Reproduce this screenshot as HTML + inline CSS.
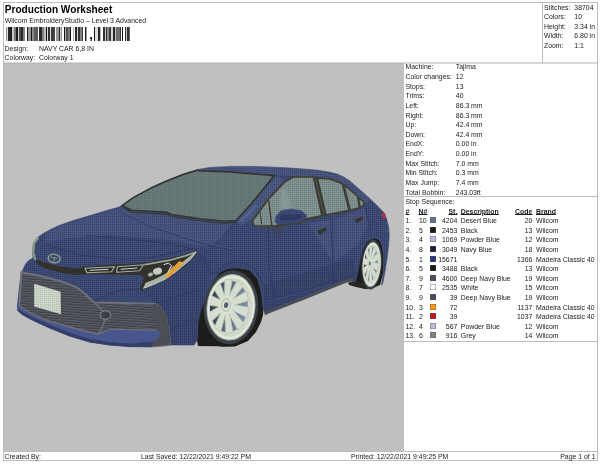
<!DOCTYPE html>
<html><head><meta charset="utf-8"><title>Production Worksheet</title>
<style>
html,body{margin:0;padding:0;background:#fff;}
body{width:600px;height:464px;position:relative;overflow:hidden;font-family:"Liberation Sans",sans-serif;font-size:6.9px;color:#1a1a1a;}
div{position:absolute;white-space:nowrap;line-height:10px;}
.ln{background:#bdbdbd;}
.b{font-weight:bold;}
.u{text-decoration:underline;text-underline-offset:0.4px;text-decoration-thickness:0.8px;}
.sw{width:6px;height:6px;box-shadow:inset 0 0 0 0.6px rgba(90,90,90,0.7);}
#title{font-size:10.1px;font-weight:bold;color:#000;line-height:12px;}
#tx{left:0;top:0;width:600px;height:464px;filter:blur(0.3px);}
#art{left:4px;top:63px;width:400px;height:388px;background:#c0c0c0;overflow:hidden;}
</style></head><body>

<div class="ln" style="left:3px;top:2px;width:595px;height:1px"></div>
<div class="ln" style="left:3px;top:460px;width:595px;height:1px"></div>
<div class="ln" style="left:3px;top:2px;width:1px;height:459px"></div>
<div class="ln" style="left:597px;top:2px;width:1px;height:459px"></div>
<div class="ln" style="left:3px;top:451px;width:595px;height:1px"></div>
<div class="ln" style="left:542px;top:2px;width:1px;height:61px"></div>
<div class="ln" style="left:404px;top:196px;width:194px;height:1px"></div>
<div class="ln" style="left:404px;top:341px;width:194px;height:1px"></div>
<div id="art"><svg width="400" height="388" viewBox="4 63 400 388" style="position:absolute;left:0;top:0">
<defs>
<pattern id="st" width="2" height="2" patternUnits="userSpaceOnUse"><rect width="2" height="2" fill="#3a4770"/><rect width="1" height="1" fill="#313d65"/><rect x="1" y="1" width="1" height="1" fill="#45527c"/></pattern>
<pattern id="gl" width="2" height="2" patternUnits="userSpaceOnUse"><rect width="2" height="2" fill="#647676"/><rect width="1" height="1" fill="#5c6e6e"/><rect x="1" y="1" width="1" height="1" fill="#6c7e7e"/></pattern>
<pattern id="gl2" width="2" height="2" patternUnits="userSpaceOnUse"><rect width="2" height="2" fill="#7a8d8c"/><rect width="1" height="1" fill="#6e8180"/><rect x="1" y="1" width="1" height="1" fill="#869998"/></pattern>
<pattern id="grl" width="4" height="2.5" patternUnits="userSpaceOnUse" patternTransform="skewY(4)"><rect width="4" height="2.5" fill="#3d3f45"/><rect width="4" height="1.3" fill="#5b5e66"/></pattern>
<pattern id="pl" width="2" height="2" patternUnits="userSpaceOnUse"><rect width="2" height="2" fill="#ccd6c8"/><rect width="1" height="1" fill="#b4c0b0"/></pattern>
<linearGradient id="gap" x1="0" y1="0" x2="1" y2="0"><stop offset="0" stop-color="#343a50"/><stop offset="0.45" stop-color="#59637f"/><stop offset="1" stop-color="#8593b4"/></linearGradient>
</defs>
<path d="M263.5 307.8 L261.5 292.7 L257.7 279.0 L250.2 270.0 L238.0 267.8 L228.0 268.5 L219.0 273.0 L212.0 283.0 L207.6 295.0 L200.8 310.0 L197.8 325.2 L197.0 340.3 L198.0 346.0 L235.0 346.5 L248.0 341.0 L256.0 332.0 L261.0 322.0 L263.0 315.0Z" fill="#1d1d1c"/>
<ellipse cx="225" cy="308" rx="30" ry="38.8" fill="#1d1d1c" transform="rotate(6 225 308)"/>
<ellipse cx="231" cy="307.3" rx="30" ry="39.2" fill="#1d1d1c" transform="rotate(6 231 307.3)"/>
<path d="M383.5 272.0 L383.7 255.0 L382.0 245.0 L379.0 239.5 L374.7 237.8 L371.0 238.8 L367.1 241.6 L362.6 250.6 L359.6 262.7 L357.3 274.8 L355.0 282.3 L360.0 287.0 L372.0 288.5 L380.0 285.0Z" fill="#1d1d1c"/>
<ellipse cx="367.8" cy="264.6" rx="11.8" ry="23.8" fill="#1d1d1c" transform="rotate(4 367.8 264.6)"/>
<ellipse cx="371.2" cy="264" rx="12" ry="24.6" fill="#1d1d1c" transform="rotate(4 371.2 264)"/>
<path d="M348.0 282.8 L355.0 280.5 L362.5 283.0 L373.0 287.5 L366.0 289.3 L356.0 287.0 L349.0 285.0Z" fill="#262622"/>
<path d="M37.5 237.5 L41.0 235.0 L45.0 232.5 L51.0 229.3 L58.3 225.8 L66.0 223.0 L75.0 220.0 L91.7 215.0 L108.3 210.0 L118.3 207.3 L121.7 205.5 L133.3 197.3 L150.0 188.2 L166.7 180.6 L183.3 174.0 L198.0 169.4 L210.0 167.4 L230.0 166.4 L250.0 166.4 L270.0 167.0 L290.0 168.0 L310.0 169.4 L320.0 170.6 L330.0 172.3 L336.7 174.0 L343.3 176.7 L350.0 181.0 L356.7 187.0 L363.3 192.7 L370.0 198.7 L376.0 204.5 L381.4 210.0 L384.6 213.5 L386.6 219.0 L388.6 226.7 L389.2 235.0 L388.6 245.0 L387.5 255.2 L385.2 270.2 L383.0 282.3 L381.5 285.3 L383.5 272.0 L383.7 255.0 L382.0 245.0 L379.0 239.5 L374.7 237.8 L371.0 238.8 L367.1 241.6 L362.6 250.6 L359.6 262.7 L357.3 274.8 L355.0 282.3 L352.5 280.8 L345.8 279.9 L338.3 283.0 L321.7 289.7 L305.0 296.4 L288.3 303.0 L273.3 308.8 L266.7 311.4 L264.5 312.8 L263.0 307.8 L261.5 292.7 L257.7 279.0 L250.2 270.0 L238.0 267.8 L228.0 268.5 L219.0 273.0 L212.0 283.0 L207.6 295.0 L200.8 310.0 L197.8 325.2 L197.0 340.3 L194.0 345.0 L170.0 345.0 L151.0 347.0 L130.0 346.7 L110.0 345.2 L90.0 342.3 L70.0 336.3 L50.0 328.3 L40.0 323.8 L30.0 319.0 L22.0 314.5 L17.6 310.5 L17.3 306.0 L18.0 300.0 L19.7 284.5 L21.5 272.4 L25.5 264.0 L29.0 260.2 L33.0 258.0 L32.5 253.0 L33.3 243.3Z" fill="url(#st)" stroke="#3a4770" stroke-width="0.6" stroke-linejoin="round"/>
<clipPath id="bc"><path d="M37.5 237.5 L41.0 235.0 L45.0 232.5 L51.0 229.3 L58.3 225.8 L66.0 223.0 L75.0 220.0 L91.7 215.0 L108.3 210.0 L118.3 207.3 L121.7 205.5 L133.3 197.3 L150.0 188.2 L166.7 180.6 L183.3 174.0 L198.0 169.4 L210.0 167.4 L230.0 166.4 L250.0 166.4 L270.0 167.0 L290.0 168.0 L310.0 169.4 L320.0 170.6 L330.0 172.3 L336.7 174.0 L343.3 176.7 L350.0 181.0 L356.7 187.0 L363.3 192.7 L370.0 198.7 L376.0 204.5 L381.4 210.0 L384.6 213.5 L386.6 219.0 L388.6 226.7 L389.2 235.0 L388.6 245.0 L387.5 255.2 L385.2 270.2 L383.0 282.3 L381.5 285.3 L383.5 272.0 L383.7 255.0 L382.0 245.0 L379.0 239.5 L374.7 237.8 L371.0 238.8 L367.1 241.6 L362.6 250.6 L359.6 262.7 L357.3 274.8 L355.0 282.3 L352.5 280.8 L345.8 279.9 L338.3 283.0 L321.7 289.7 L305.0 296.4 L288.3 303.0 L273.3 308.8 L266.7 311.4 L264.5 312.8 L263.0 307.8 L261.5 292.7 L257.7 279.0 L250.2 270.0 L238.0 267.8 L228.0 268.5 L219.0 273.0 L212.0 283.0 L207.6 295.0 L200.8 310.0 L197.8 325.2 L197.0 340.3 L194.0 345.0 L170.0 345.0 L151.0 347.0 L130.0 346.7 L110.0 345.2 L90.0 342.3 L70.0 336.3 L50.0 328.3 L40.0 323.8 L30.0 319.0 L22.0 314.5 L17.6 310.5 L17.3 306.0 L18.0 300.0 L19.7 284.5 L21.5 272.4 L25.5 264.0 L29.0 260.2 L33.0 258.0 L32.5 253.0 L33.3 243.3Z"/></clipPath>
<g clip-path="url(#bc)">
<path d="M45.0 233.0 L60.0 226.0 L122.0 207.0 L170.0 214.0 L236.0 221.5 L222.0 238.0 L205.0 247.0 L170.0 240.0 L110.0 235.0 L70.0 238.0 L45.0 243.0Z" fill="#ffffff" opacity="0.05"/>
<path d="M198.0 169.0 L250.0 166.0 L310.0 169.0 L345.0 177.0 L372.0 200.0 L366.0 203.0 L341.0 181.5 L313.0 176.3 L293.0 176.5 L276.0 174.5 L230.0 171.0 L198.0 170.0Z" fill="#ffffff" opacity="0.06"/>
<path d="M276.0 176.0 L284.0 180.0 L253.0 219.0 L240.0 226.0 L237.0 221.0Z" fill="#ffffff" opacity="0.07"/>
<path d="M308.0 223.5 L332.0 219.5 L333.0 262.0Z" fill="#ffffff" opacity="0.06"/>
<path d="M334.0 219.0 L365.0 208.0 L368.0 225.0 L358.0 245.0 L334.0 262.0Z" fill="#ffffff" opacity="0.05"/>
<path d="M264.0 285.0 L352.0 258.0 L357.0 275.0 L353.0 281.0 L264.5 313.0Z" fill="#000000" opacity="0.08"/>
<path d="M140.0 291.0 L197.0 251.0 L212.0 262.0 L204.0 300.0 L197.0 346.0 L170.0 346.0 L160.0 306.0Z" fill="#000000" opacity="0.05"/>
<path d="M255.5 206.0 L248.0 214.0 L241.0 220.5" fill="none" stroke="#5767a0" stroke-width="2.6" stroke-linecap="round" stroke-linejoin="round" opacity="0.75"/>
<path d="M234.0 223.0 L226.0 233.0 L215.0 245.0 L203.0 256.0 L196.0 262.0" fill="none" stroke="#2e3762" stroke-width="0.8" stroke-linecap="round" stroke-linejoin="round"/>
<path d="M122.0 211.5 L150.0 225.0 L185.0 237.0 L215.0 245.5 L233.0 249.0" fill="none" stroke="#4c598a" stroke-width="0.9" stroke-linecap="round" stroke-linejoin="round"/>
<path d="M122.0 212.7 L150.0 226.2 L185.0 238.2 L215.0 246.7 L233.0 250.2" fill="none" stroke="#2c355f" stroke-width="0.7" stroke-linecap="round" stroke-linejoin="round"/>
<path d="M86.0 235.5 L130.0 239.5 L170.0 243.5 L197.0 250.0" fill="none" stroke="#2e3762" stroke-width="0.8" stroke-linecap="round" stroke-linejoin="round"/>
<path d="M47.0 245.0 L80.0 255.0 L120.0 259.0 L150.0 258.0 L190.0 249.0" fill="none" stroke="#2e3762" stroke-width="0.8" stroke-linecap="round" stroke-linejoin="round"/>
<path d="M198.0 251.0 L207.0 266.0 L214.0 275.0 L226.0 264.0 L240.0 262.0 L254.0 268.0 L262.0 282.0" fill="none" stroke="#2e3762" stroke-width="0.7" stroke-linecap="round" stroke-linejoin="round"/>
<path d="M268.0 300.0 L300.0 292.0 L333.0 282.0 L352.0 276.0" fill="none" stroke="#2e3762" stroke-width="0.8" stroke-linecap="round" stroke-linejoin="round"/>
<path d="M268.0 301.2 L300.0 293.2 L333.0 283.2" fill="none" stroke="#4a5788" stroke-width="0.6" stroke-linecap="round" stroke-linejoin="round"/>
<path d="M96.0 300.0 L120.0 290.0 L142.0 289.0" fill="none" stroke="#2e3762" stroke-width="0.8" stroke-linecap="round" stroke-linejoin="round"/>
<path d="M160.0 305.0 L178.0 296.0 L197.0 290.0" fill="none" stroke="#2e3762" stroke-width="0.7" stroke-linecap="round" stroke-linejoin="round"/>
<path d="M170.0 330.0 L185.0 322.0 L197.0 318.0" fill="none" stroke="#2e3762" stroke-width="0.7" stroke-linecap="round" stroke-linejoin="round"/>
</g>
<path d="M198.7 170.6 L230.0 172.0 L274.3 175.6 L251.7 203.3 L236.0 220.5 L225.0 221.3 L200.0 218.7 L171.7 214.5 L166.7 212.3 L150.0 211.3 L131.7 210.3 L122.2 205.6 L133.3 197.6 L150.0 188.6 L166.7 181.0 L183.3 174.4 L198.0 170.0Z" fill="url(#gl)" stroke="#35352e" stroke-width="1.6" stroke-linejoin="round"/>
<path d="M123.0 207.5 L131.7 212.0 L150.0 213.2 L166.7 214.3 L171.7 216.5 L200.0 220.8 L225.0 223.3 L236.0 222.3" fill="none" stroke="#33332c" stroke-width="1.1" stroke-linecap="round" stroke-linejoin="round"/>
<path d="M253.3 224.2 L252.5 220.8 L268.3 199.2 L285.0 181.7 L293.3 176.9 L313.5 176.8 L322.0 215.6 L305.0 220.0 L280.0 226.2 L255.0 225.8Z" fill="url(#gl2)" stroke="#403f31" stroke-width="1.8" stroke-linejoin="round"/>
<path d="M281.0 190.5 L284.5 188.5 L293.0 208.3 L280.0 210.5Z" fill="#849796"/>
<path d="M317.3 178.0 L330.0 178.8 L342.3 183.6 L349.3 210.4 L325.8 215.2Z" fill="url(#gl2)" stroke="#403f31" stroke-width="1.8" stroke-linejoin="round"/>
<path d="M313.3 176.6 L317.3 177.6 L325.9 215.2 L321.8 216.0Z" fill="#3a3a33"/>
<path d="M315.5 179.0 L323.7 214.0" fill="none" stroke="#5d6670" stroke-width="0.7" stroke-linecap="round" stroke-linejoin="round"/>
<path d="M343.9 184.6 L357.5 196.2 L359.4 207.8 L350.1 210.2Z" fill="url(#gl2)" stroke="#403f31" stroke-width="1.6" stroke-linejoin="round"/>
<path d="M358.6 197.8 L364.3 202.8 L363.3 205.5 L360.2 207.2Z" fill="url(#gl2)" stroke="#403f31" stroke-width="1.4" stroke-linejoin="round"/>
<path d="M268.7 200.8 L271.7 225.0" fill="none" stroke="#403f31" stroke-width="1.4" stroke-linecap="round" stroke-linejoin="round"/>
<path d="M260.0 212.5 L261.7 224.0" fill="none" stroke="#403f31" stroke-width="1.1" stroke-linecap="round" stroke-linejoin="round"/>
<path d="M277.3 225.5 L275.3 233.0" fill="none" stroke="#45452f" stroke-width="1.1" stroke-linecap="round" stroke-linejoin="round"/>
<path d="M281.3 226.5 L279.0 235.0" fill="none" stroke="#45452f" stroke-width="1.1" stroke-linecap="round" stroke-linejoin="round"/>
<path d="M275.0 221.5 L276.0 216.0 L281.0 210.5 L291.0 209.0 L301.0 210.5 L306.5 215.0 L307.0 219.0 L303.0 221.5 L298.0 224.0 L278.0 225.2Z" fill="url(#st)" stroke="#485588" stroke-width="0.8" stroke-linejoin="round"/>
<path d="M279.0 217.5 L282.0 214.5 L300.0 214.0 L302.5 216.5 L301.0 219.5 L281.0 220.5Z" fill="#2f3964"/>
<path d="M265.0 226.6 L275.0 226.3 L278.0 225.3 L298.0 223.7 L307.0 219.2 L311.0 217.7 L322.0 216.3" fill="none" stroke="#403f31" stroke-width="1.6" stroke-linecap="round" stroke-linejoin="round"/>
<path d="M330.2 216.5 L332.3 248.9 L333.4 284.0" fill="none" stroke="#2c3768" stroke-width="0.8" stroke-linecap="round" stroke-linejoin="round"/>
<path d="M365.7 208.0 L366.8 216.5 L370.0 227.0 L371.0 236.0" fill="none" stroke="#2c3768" stroke-width="0.8" stroke-linecap="round" stroke-linejoin="round"/>
<path d="M268.0 229.3 L269.3 266.7 L272.0 285.0 L274.7 298.7" fill="none" stroke="#2c3768" stroke-width="0.8" stroke-linecap="round" stroke-linejoin="round"/>
<path d="M317.2 230.8 L325.9 227.3 L327.0 230.3 L319.4 234.9Z" fill="#35352e"/>
<path d="M355.0 219.8 L362.5 216.5 L362.8 219.6 L356.5 223.0Z" fill="#35352e"/>
<path d="M381.5 213.3 L385.1 213.5 L386.0 217.8 L383.0 218.5Z" fill="#c42a3a"/>
<path d="M264.5 312.6 L266.7 311.2 L273.3 308.6 L288.3 302.8 L305.0 296.2 L321.7 289.5 L338.3 282.8 L345.8 279.7 L353.0 277.8 L353.3 280.8 L346.1 282.7 L338.6 285.8 L322.0 292.5 L305.3 299.2 L288.6 305.8 L273.6 311.6 L267.0 314.2 L264.8 315.6Z" fill="#4b4d55"/>
<path d="M35.8 259.2 L43.3 262.3 L60.0 266.5 L76.7 268.5 L84.0 267.0 L110.0 265.0 L144.0 263.0 L176.0 257.0 L197.0 250.5 L196.0 254.0 L184.0 267.0 L166.0 279.0 L152.0 286.0 L141.0 290.5 L140.0 288.0 L144.0 278.0 L140.0 275.0 L86.7 274.2 L76.7 275.0 L60.0 272.6 L43.3 267.8 L36.2 263.2Z" fill="#33312b"/>
<path d="M37.8 238.0 L34.0 243.3 L33.2 253.3 L35.2 259.0" fill="none" stroke="#8a9a88" stroke-width="2.2" stroke-linecap="round" stroke-linejoin="round"/>
<ellipse cx="54.2" cy="258.5" rx="6" ry="4.3" fill="none" stroke="#8c9c8a" stroke-width="1.4" transform="rotate(8 54.2 258.3)"/>
<path d="M50.5 257.0 L57.5 258.3" fill="none" stroke="#8c9c8a" stroke-width="0.9" stroke-linecap="round" stroke-linejoin="round"/>
<path d="M54.3 257.5 L53.8 261.5" fill="none" stroke="#8c9c8a" stroke-width="0.9" stroke-linecap="round" stroke-linejoin="round"/>
<path d="M85.0 268.2 L114.5 266.8 L111.5 271.8 L87.0 272.8Z" fill="#2e2e2a" stroke="#a3b3a3" stroke-width="1.1" stroke-linejoin="round"/>
<path d="M90.0 270.3 L108.0 269.4" fill="none" stroke="#e4ebe4" stroke-width="0.9" stroke-linecap="round" stroke-linejoin="round"/>
<path d="M117.5 266.7 L143.5 264.8 L139.5 270.8 L116.5 272.2Z" fill="#2e2e2a" stroke="#a3b3a3" stroke-width="1.1" stroke-linejoin="round"/>
<path d="M121.0 269.3 L137.0 268.0" fill="none" stroke="#e4ebe4" stroke-width="0.9" stroke-linecap="round" stroke-linejoin="round"/>
<path d="M145.0 264.6 L153.3 263.2 L170.0 260.2 L186.0 255.6 L195.5 252.2" fill="none" stroke="#98a694" stroke-width="1.7" stroke-linecap="round" stroke-linejoin="round"/>
<path d="M143.2 288.0 L153.3 284.2 L165.0 278.8 L176.7 270.6 L190.2 259.2 L196.3 251.6 L191.5 255.0 L178.0 265.5 L165.0 274.0 L153.0 280.0 L145.8 282.8Z" fill="#a7b5a7"/>
<path d="M143.6 288.2 L153.3 284.6 L165.0 279.2 L176.7 271.0 L190.2 259.6 L195.8 252.6" fill="none" stroke="#e6ece6" stroke-width="0.9" stroke-linecap="round" stroke-linejoin="round"/>
<ellipse cx="157.5" cy="271.2" rx="4.6" ry="3.4" fill="#c3cdc3" transform="rotate(-15 157.5 271.2)"/>
<ellipse cx="150.5" cy="274.5" rx="2.6" ry="1.8" fill="#aab6aa" transform="rotate(-15 150.5 274.5)"/>
<path d="M164.0 264.5 L168.5 263.2 L171.5 265.5 L168.0 272.0" fill="none" stroke="#dfe6df" stroke-width="1.0" stroke-linecap="round" stroke-linejoin="round"/>
<path d="M166.0 275.5 L173.5 266.0" fill="none" stroke="#cfd8cf" stroke-width="0.9" stroke-linecap="round" stroke-linejoin="round"/>
<path d="M164.4 277.1 L179.0 261.3 L184.3 262.5 L168.5 277.7Z" fill="#e8a030"/>
<path d="M21.3 272.3 L40.0 276.0 L60.0 281.0 L76.0 287.0 L84.0 293.0 L94.0 302.5 L154.0 303.6 L159.0 306.0 L165.0 315.0 L168.0 328.0 L170.0 342.0 L169.0 345.0 L151.0 346.4 L154.0 340.0 L161.0 334.0 L157.0 330.5 L110.0 329.5 L104.0 332.0 L98.0 334.5 L70.0 327.5 L44.5 320.0 L27.2 311.5 L19.2 306.0 L20.5 289.0Z" fill="url(#grl)" stroke="#6e717b" stroke-width="1.9" stroke-linejoin="round"/>
<path d="M154.0 303.6 L159.0 306.0 L165.0 315.0 L168.0 328.0 L170.0 342.0 L169.0 345.0 L151.0 346.4 L154.0 340.0 L161.0 334.0 L157.0 330.5 L156.0 318.0 L152.5 308.0Z" fill="#4c4e56"/>
<path d="M159.0 306.0 L165.0 315.0 L168.0 328.0 L170.0 342.0" fill="none" stroke="#45452f" stroke-width="0.8" stroke-linecap="round" stroke-linejoin="round"/>
<path d="M94.0 302.5 L100.0 308.0 L106.0 315.0 L103.0 326.0 L98.0 334.0" fill="none" stroke="#6b6e78" stroke-width="1.6" stroke-linecap="round" stroke-linejoin="round"/>
<path d="M34.2 283.8 L60.6 291.7 L61.0 314.3 L34.2 306.4Z" fill="url(#pl)"/>
<path d="M17.3 306.0 L18.8 306.3 L27.2 312.0 L44.5 320.5 L70.0 328.0 L98.0 335.0 L104.0 332.3 L110.0 329.8 L157.0 330.8 L161.0 334.0 L154.0 342.0 L130.0 344.0 L110.0 342.5 L90.0 339.5 L70.0 333.5 L50.0 325.5 L30.0 316.5 L17.6 309.5Z" fill="#47568c"/>
<path d="M17.6 309.0 L30.0 316.0 L50.0 325.0 L70.0 333.0 L90.0 339.0 L110.0 342.0 L130.0 343.7 L154.0 341.5 L151.0 347.0 L130.0 346.7 L110.0 345.2 L90.0 342.3 L70.0 336.3 L50.0 328.3 L40.0 323.8 L30.0 319.0 L22.0 314.5 L17.6 310.5Z" fill="#323d6a"/>
<ellipse cx="105.5" cy="315" rx="5.2" ry="4.4" fill="#3d3f47" stroke="#6f727c" stroke-width="1.6"/>
<g transform="translate(231 307.3) rotate(6) scale(0.2400 0.3280)">
<circle r="113" fill="#3a4048"/>
<circle r="100" fill="#d0d9c9"/>
<circle cx="-9" cy="-2" r="79" fill="url(#gap)"/>
<path d="M-22.2 2.4 L69.6 25.5 L74.6 -5.0 L-19.8 -12.4Z" fill="#d6decf" stroke="#b3bfae" stroke-width="2.5" stroke-linejoin="round"/>
<path d="M-25.9 0.7 L39.3 67.3 L59.5 43.8 L-16.1 -10.7Z" fill="#d6decf" stroke="#b3bfae" stroke-width="2.5" stroke-linejoin="round"/>
<path d="M-28.2 -2.8 L-10.4 83.4 L19.2 74.4 L-13.8 -7.2Z" fill="#d6decf" stroke="#b3bfae" stroke-width="2.5" stroke-linejoin="round"/>
<path d="M-28.1 -7.3 L-60.5 66.6 L-31.0 76.1 L-13.9 -2.7Z" fill="#d6decf" stroke="#b3bfae" stroke-width="2.5" stroke-linejoin="round"/>
<path d="M-25.2 -11.2 L-90.4 22.9 L-73.2 48.6 L-16.8 1.2Z" fill="#d6decf" stroke="#b3bfae" stroke-width="2.5" stroke-linejoin="round"/>
<path d="M-20.0 -12.4 L-88.0 -29.6 L-92.1 1.1 L-22.0 2.4Z" fill="#d6decf" stroke="#b3bfae" stroke-width="2.5" stroke-linejoin="round"/>
<path d="M-15.3 -9.9 L-55.6 -69.6 L-79.2 -49.5 L-26.7 -0.1Z" fill="#d6decf" stroke="#b3bfae" stroke-width="2.5" stroke-linejoin="round"/>
<path d="M-13.5 -5.1 L-6.9 -83.2 L-37.9 -82.6 L-28.5 -4.9Z" fill="#d6decf" stroke="#b3bfae" stroke-width="2.5" stroke-linejoin="round"/>
<path d="M-14.8 -0.7 L40.5 -66.5 L15.0 -84.1 L-27.2 -9.3Z" fill="#d6decf" stroke="#b3bfae" stroke-width="2.5" stroke-linejoin="round"/>
<path d="M-18.2 1.9 L69.7 -25.4 L57.9 -54.1 L-23.8 -11.9Z" fill="#d6decf" stroke="#b3bfae" stroke-width="2.5" stroke-linejoin="round"/>
<circle cx="-21" cy="-5" r="31" fill="#d9e1d2"/>
<circle cx="-21" cy="-5" r="19" fill="none" stroke="#b4c0b0" stroke-width="4"/>
<circle cx="-21" cy="-5" r="9" fill="#565e70"/>
<circle r="94" fill="none" stroke="#e4ebdc" stroke-width="7"/>
<circle r="100" fill="none" stroke="#a3b09f" stroke-width="3"/>
</g>
<g transform="translate(371.7 264.5) rotate(4) scale(0.0900 0.2220)">
<circle r="113" fill="#3a4048"/>
<circle r="100" fill="#d0d9c9"/>
<circle cx="-10" cy="-2" r="78" fill="url(#gap)"/>
<path d="M-23.2 3.9 L67.5 26.9 L72.7 -6.7 L-20.8 -11.9Z" fill="#d6decf" stroke="#b3bfae" stroke-width="2.5" stroke-linejoin="round"/>
<path d="M-27.2 2.1 L36.7 67.9 L58.7 41.9 L-16.8 -10.1Z" fill="#d6decf" stroke="#b3bfae" stroke-width="2.5" stroke-linejoin="round"/>
<path d="M-29.6 -1.6 L-13.0 82.9 L19.5 72.9 L-14.4 -6.4Z" fill="#d6decf" stroke="#b3bfae" stroke-width="2.5" stroke-linejoin="round"/>
<path d="M-29.6 -6.5 L-62.4 65.2 L-30.1 75.7 L-14.4 -1.5Z" fill="#d6decf" stroke="#b3bfae" stroke-width="2.5" stroke-linejoin="round"/>
<path d="M-26.4 -10.7 L-91.2 21.1 L-72.6 49.5 L-17.6 2.7Z" fill="#d6decf" stroke="#b3bfae" stroke-width="2.5" stroke-linejoin="round"/>
<path d="M-20.8 -11.9 L-87.6 -30.9 L-92.6 2.7 L-23.2 3.9Z" fill="#d6decf" stroke="#b3bfae" stroke-width="2.5" stroke-linejoin="round"/>
<path d="M-15.9 -9.1 L-54.6 -69.7 L-80.7 -48.0 L-28.1 1.1Z" fill="#d6decf" stroke="#b3bfae" stroke-width="2.5" stroke-linejoin="round"/>
<path d="M-14.0 -4.1 L-6.2 -82.2 L-40.2 -81.6 L-30.0 -3.9Z" fill="#d6decf" stroke="#b3bfae" stroke-width="2.5" stroke-linejoin="round"/>
<path d="M-15.4 0.5 L40.3 -64.8 L12.2 -84.0 L-28.6 -8.5Z" fill="#d6decf" stroke="#b3bfae" stroke-width="2.5" stroke-linejoin="round"/>
<path d="M-18.9 3.4 L68.5 -23.6 L55.3 -55.0 L-25.1 -11.4Z" fill="#d6decf" stroke="#b3bfae" stroke-width="2.5" stroke-linejoin="round"/>
<circle cx="-22" cy="-4" r="31" fill="#d9e1d2"/>
<circle cx="-22" cy="-4" r="19" fill="none" stroke="#b4c0b0" stroke-width="4"/>
<circle cx="-22" cy="-4" r="9" fill="#565e70"/>
<circle r="94" fill="none" stroke="#e4ebdc" stroke-width="7"/>
<circle r="100" fill="none" stroke="#a3b09f" stroke-width="3"/>
</g>
</svg></div>
<svg style="position:absolute;left:0;top:60px" width="600" height="6" viewBox="0 60 600 6"><rect x="3" y="62.5" width="595" height="1" fill="#b4b4b4"/></svg>
<div id="tx">
<div id="title" style="left:4.8px;top:3.5px">Production Worksheet</div>
<div style="left:4.80px;top:16.10px">Wilcom EmbroideryStudio – Level 3 Advanced</div>
<div style="left:4.60px;top:43.60px">Design:</div>
<div style="left:39.00px;top:43.60px">NAVY CAR 6,8 IN</div>
<div style="left:4.60px;top:53.20px">Colorway:</div>
<div style="left:39.00px;top:53.20px">Colorway 1</div>
<svg style="position:absolute;left:0;top:26px;filter:blur(0.3px)" width="140" height="16" viewBox="0 26 140 16" shape-rendering="crispEdges"><rect x="5.75" y="27.2" width="1.05" height="13.3" fill="#969696"/><rect x="6.80" y="27.2" width="1.40" height="13.3" fill="#dcdcdc"/><rect x="8.20" y="27.2" width="1.40" height="13.3" fill="#282828"/><rect x="9.60" y="27.2" width="0.70" height="13.3" fill="#646464"/><rect x="10.30" y="27.2" width="1.75" height="13.3" fill="#1e1e1e"/><rect x="12.05" y="27.2" width="1.75" height="13.3" fill="#c8c8c8"/><rect x="13.80" y="27.2" width="1.75" height="13.3" fill="#787878"/><rect x="15.55" y="27.2" width="2.10" height="13.3" fill="#1e1e1e"/><rect x="17.65" y="27.2" width="1.40" height="13.3" fill="#d2d2d2"/><rect x="19.05" y="27.2" width="2.10" height="13.3" fill="#505050"/><rect x="21.14" y="27.2" width="1.75" height="13.3" fill="#282828"/><rect x="22.89" y="27.2" width="1.75" height="13.3" fill="#828282"/><rect x="26.74" y="27.2" width="1.40" height="13.3" fill="#1e1e1e"/><rect x="28.14" y="27.2" width="2.45" height="13.3" fill="#969696"/><rect x="30.59" y="27.2" width="1.40" height="13.3" fill="#141414"/><rect x="31.99" y="27.2" width="2.10" height="13.3" fill="#8c8c8c"/><rect x="34.09" y="27.2" width="3.50" height="13.3" fill="#5a5a5a"/><rect x="39.34" y="27.2" width="2.45" height="13.3" fill="#282828"/><rect x="41.79" y="27.2" width="2.45" height="13.3" fill="#828282"/><rect x="44.24" y="27.2" width="1.75" height="13.3" fill="#bebebe"/><rect x="46.00" y="27.2" width="0.84" height="13.3" fill="#141414"/><rect x="46.84" y="27.2" width="1.12" height="13.3" fill="#dcdcdc"/><rect x="47.96" y="27.2" width="1.89" height="13.3" fill="#323232"/><rect x="49.85" y="27.2" width="1.19" height="13.3" fill="#e6e6e6"/><rect x="51.04" y="27.2" width="1.96" height="13.3" fill="#3c3c3c"/><rect x="53.00" y="27.2" width="1.75" height="13.3" fill="#464646"/><rect x="56.15" y="27.2" width="2.80" height="13.3" fill="#969696"/><rect x="58.95" y="27.2" width="1.05" height="13.3" fill="#282828"/><rect x="60.00" y="27.2" width="1.05" height="13.3" fill="#c8c8c8"/><rect x="61.05" y="27.2" width="1.05" height="13.3" fill="#969696"/><rect x="63.84" y="27.2" width="1.40" height="13.3" fill="#141414"/><rect x="65.24" y="27.2" width="1.05" height="13.3" fill="#b4b4b4"/><rect x="66.29" y="27.2" width="2.10" height="13.3" fill="#505050"/><rect x="68.39" y="27.2" width="1.40" height="13.3" fill="#787878"/><rect x="69.79" y="27.2" width="1.05" height="13.3" fill="#1e1e1e"/><rect x="72.94" y="27.2" width="1.05" height="13.3" fill="#aaaaaa"/><rect x="75.04" y="27.2" width="1.75" height="13.3" fill="#282828"/><rect x="76.79" y="27.2" width="1.05" height="13.3" fill="#d2d2d2"/><rect x="77.84" y="27.2" width="1.75" height="13.3" fill="#323232"/><rect x="79.59" y="27.2" width="2.45" height="13.3" fill="#828282"/><rect x="82.04" y="27.2" width="1.05" height="13.3" fill="#3c3c3c"/><rect x="84.84" y="27.2" width="1.40" height="13.3" fill="#1e1e1e"/><rect x="86.24" y="27.2" width="1.05" height="13.3" fill="#969696"/><rect x="93.87" y="27.2" width="1.47" height="13.3" fill="#141414"/><rect x="95.33" y="27.2" width="2.57" height="13.3" fill="#dcdcdc"/><rect x="97.90" y="27.2" width="2.20" height="13.3" fill="#282828"/><rect x="100.10" y="27.2" width="1.10" height="13.3" fill="#bebebe"/><rect x="102.66" y="27.2" width="2.57" height="13.3" fill="#323232"/><rect x="105.23" y="27.2" width="1.10" height="13.3" fill="#c8c8c8"/><rect x="106.33" y="27.2" width="1.10" height="13.3" fill="#323232"/><rect x="107.43" y="27.2" width="1.83" height="13.3" fill="#8c8c8c"/><rect x="109.26" y="27.2" width="1.83" height="13.3" fill="#3c3c3c"/><rect x="111.09" y="27.2" width="2.20" height="13.3" fill="#d2d2d2"/><rect x="113.29" y="27.2" width="1.47" height="13.3" fill="#282828"/><rect x="114.76" y="27.2" width="1.10" height="13.3" fill="#bebebe"/><rect x="115.86" y="27.2" width="3.67" height="13.3" fill="#6e6e6e"/><rect x="119.52" y="27.2" width="1.10" height="13.3" fill="#3c3c3c"/><rect x="122.09" y="27.2" width="1.10" height="13.3" fill="#141414"/><rect x="124.66" y="27.2" width="1.10" height="13.3" fill="#323232"/><rect x="125.76" y="27.2" width="1.10" height="13.3" fill="#c8c8c8"/><rect x="126.86" y="27.2" width="1.83" height="13.3" fill="#323232"/><rect x="128.69" y="27.2" width="1.47" height="13.3" fill="#646464"/></svg>
<div class="b" style="left:89.2px;top:28px;font-size:13px;line-height:14px;color:#000">,</div>
<div style="left:544.00px;top:2.50px">Stitches:</div>
<div style="left:574.30px;top:2.50px">38704</div>
<div style="left:544.00px;top:12.05px">Colors:</div>
<div style="left:574.30px;top:12.05px">10</div>
<div style="left:544.00px;top:21.60px">Height:</div>
<div style="left:574.30px;top:21.60px">3.34 in</div>
<div style="left:544.00px;top:31.15px">Width:</div>
<div style="left:574.30px;top:31.15px">6.80 in</div>
<div style="left:544.00px;top:40.70px">Zoom:</div>
<div style="left:574.30px;top:40.70px">1:1</div>
<div style="left:405.50px;top:62.35px">Machine:</div>
<div style="left:455.80px;top:62.35px">Tajima</div>
<div style="left:405.50px;top:71.98px">Color changes:</div>
<div style="left:455.80px;top:71.98px">12</div>
<div style="left:405.50px;top:81.61px">Stops:</div>
<div style="left:455.80px;top:81.61px">13</div>
<div style="left:405.50px;top:91.24px">Trims:</div>
<div style="left:455.80px;top:91.24px">40</div>
<div style="left:405.50px;top:100.87px">Left:</div>
<div style="left:455.80px;top:100.87px">86.3 mm</div>
<div style="left:405.50px;top:110.50px">Right:</div>
<div style="left:455.80px;top:110.50px">86.3 mm</div>
<div style="left:405.50px;top:120.13px">Up:</div>
<div style="left:455.80px;top:120.13px">42.4 mm</div>
<div style="left:405.50px;top:129.76px">Down:</div>
<div style="left:455.80px;top:129.76px">42.4 mm</div>
<div style="left:405.50px;top:139.39px">EndX:</div>
<div style="left:455.80px;top:139.39px">0.00 in</div>
<div style="left:405.50px;top:149.02px">EndY:</div>
<div style="left:455.80px;top:149.02px">0.00 in</div>
<div style="left:405.50px;top:158.65px">Max Stitch:</div>
<div style="left:455.80px;top:158.65px">7.0 mm</div>
<div style="left:405.50px;top:168.28px">Min Stitch:</div>
<div style="left:455.80px;top:168.28px">0.3 mm</div>
<div style="left:405.50px;top:177.91px">Max Jump:</div>
<div style="left:455.80px;top:177.91px">7.4 mm</div>
<div style="left:405.50px;top:187.54px">Total Bobbin:</div>
<div style="left:455.80px;top:187.54px">243.03ft</div>
<div style="left:405.50px;top:196.70px">Stop Sequence:</div>
<div class="b u" style="left:405.50px;top:206.90px">#</div>
<div class="b u" style="left:418.50px;top:206.90px">N#</div>
<div class="b u" style="right:142.70px;top:206.90px">St.</div>
<div class="b u" style="left:460.80px;top:206.90px">Description</div>
<div class="b u" style="right:67.70px;top:206.90px">Code</div>
<div class="b u" style="left:536.00px;top:206.90px">Brand</div>
<div style="left:405.50px;top:216.20px">1.</div>
<div style="left:419.00px;top:216.20px">10</div>
<div class="sw" style="left:430px;top:217px;background:#64708f"></div>
<div style="right:142.70px;top:216.20px">4204</div>
<div style="left:460.80px;top:216.20px">Desert Blue</div>
<div style="right:67.70px;top:216.20px">20</div>
<div style="left:536.00px;top:216.20px">Wilcom</div>
<div style="left:405.50px;top:225.79px">2.</div>
<div style="left:419.00px;top:225.79px">5</div>
<div class="sw" style="left:430px;top:227px;background:#1c1714"></div>
<div style="right:142.70px;top:225.79px">2453</div>
<div style="left:460.80px;top:225.79px">Black</div>
<div style="right:67.70px;top:225.79px">13</div>
<div style="left:536.00px;top:225.79px">Wilcom</div>
<div style="left:405.50px;top:235.38px">3.</div>
<div style="left:419.00px;top:235.38px">4</div>
<div class="sw" style="left:430px;top:236px;background:#bdb9e0"></div>
<div style="right:142.70px;top:235.38px">1069</div>
<div style="left:460.80px;top:235.38px">Powder Blue</div>
<div style="right:67.70px;top:235.38px">12</div>
<div style="left:536.00px;top:235.38px">Wilcom</div>
<div style="left:405.50px;top:244.97px">4.</div>
<div style="left:419.00px;top:244.97px">8</div>
<div class="sw" style="left:430px;top:246px;background:#1b1f33"></div>
<div style="right:142.70px;top:244.97px">3049</div>
<div style="left:460.80px;top:244.97px">Navy Blue</div>
<div style="right:67.70px;top:244.97px">18</div>
<div style="left:536.00px;top:244.97px">Wilcom</div>
<div style="left:405.50px;top:254.56px">5.</div>
<div style="left:419.00px;top:254.56px">1</div>
<div class="sw" style="left:430px;top:256px;background:#27337a"></div>
<div style="right:142.70px;top:254.56px">15671</div>
<div style="right:67.70px;top:254.56px">1366</div>
<div style="left:536.00px;top:254.56px">Madeira Classic 40</div>
<div style="left:405.50px;top:264.15px">6.</div>
<div style="left:419.00px;top:264.15px">5</div>
<div class="sw" style="left:430px;top:265px;background:#1c1714"></div>
<div style="right:142.70px;top:264.15px">3488</div>
<div style="left:460.80px;top:264.15px">Black</div>
<div style="right:67.70px;top:264.15px">13</div>
<div style="left:536.00px;top:264.15px">Wilcom</div>
<div style="left:405.50px;top:273.74px">7.</div>
<div style="left:419.00px;top:273.74px">9</div>
<div class="sw" style="left:430px;top:275px;background:#4a4a63"></div>
<div style="right:142.70px;top:273.74px">4600</div>
<div style="left:460.80px;top:273.74px">Deep Navy Blue</div>
<div style="right:67.70px;top:273.74px">19</div>
<div style="left:536.00px;top:273.74px">Wilcom</div>
<div style="left:405.50px;top:283.33px">8.</div>
<div style="left:419.00px;top:283.33px">7</div>
<div class="sw" style="left:430px;top:284px;background:#ffffff"></div>
<div style="right:142.70px;top:283.33px">2535</div>
<div style="left:460.80px;top:283.33px">White</div>
<div style="right:67.70px;top:283.33px">15</div>
<div style="left:536.00px;top:283.33px">Wilcom</div>
<div style="left:405.50px;top:292.92px">9.</div>
<div style="left:419.00px;top:292.92px">9</div>
<div class="sw" style="left:430px;top:294px;background:#4a4a63"></div>
<div style="right:142.70px;top:292.92px">39</div>
<div style="left:460.80px;top:292.92px">Deep Navy Blue</div>
<div style="right:67.70px;top:292.92px">19</div>
<div style="left:536.00px;top:292.92px">Wilcom</div>
<div style="left:405.50px;top:302.51px">10.</div>
<div style="left:419.00px;top:302.51px">3</div>
<div class="sw" style="left:430px;top:304px;background:#ff9618"></div>
<div style="right:142.70px;top:302.51px">72</div>
<div style="right:67.70px;top:302.51px">1137</div>
<div style="left:536.00px;top:302.51px">Madeira Classic 40</div>
<div style="left:405.50px;top:312.10px">11.</div>
<div style="left:419.00px;top:312.10px">2</div>
<div class="sw" style="left:430px;top:313px;background:#c4151c"></div>
<div style="right:142.70px;top:312.10px">39</div>
<div style="right:67.70px;top:312.10px">1037</div>
<div style="left:536.00px;top:312.10px">Madeira Classic 40</div>
<div style="left:405.50px;top:321.69px">12.</div>
<div style="left:419.00px;top:321.69px">4</div>
<div class="sw" style="left:430px;top:323px;background:#bdb9e0"></div>
<div style="right:142.70px;top:321.69px">567</div>
<div style="left:460.80px;top:321.69px">Powder Blue</div>
<div style="right:67.70px;top:321.69px">12</div>
<div style="left:536.00px;top:321.69px">Wilcom</div>
<div style="left:405.50px;top:331.28px">13.</div>
<div style="left:419.00px;top:331.28px">6</div>
<div class="sw" style="left:430px;top:332px;background:#858585"></div>
<div style="right:142.70px;top:331.28px">916</div>
<div style="left:460.80px;top:331.28px">Grey</div>
<div style="right:67.70px;top:331.28px">14</div>
<div style="left:536.00px;top:331.28px">Wilcom</div>
<div style="left:4.60px;top:451.70px">Created By:</div>
<div style="left:141.00px;top:451.70px">Last Saved: 12/22/2021 9:49:22 PM</div>
<div style="left:351.00px;top:451.70px">Printed: 12/22/2021 9:49:25 PM</div>
<div style="right:4.50px;top:451.70px">Page 1 of 1</div>
</div>

</body></html>
